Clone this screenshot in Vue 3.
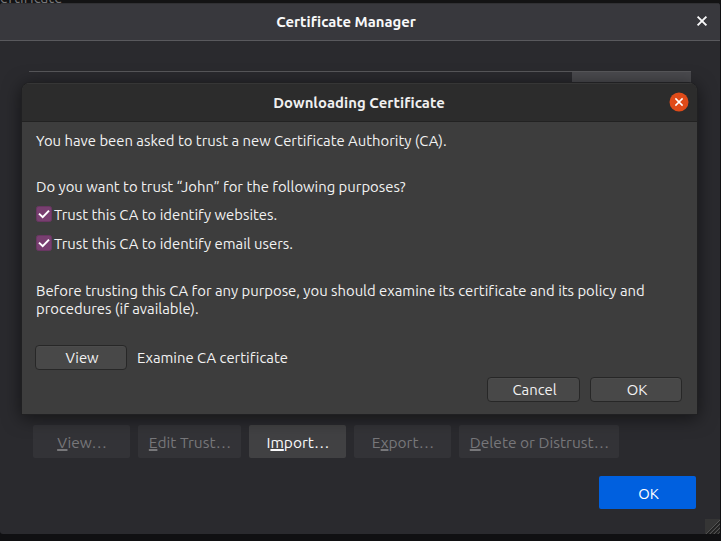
<script setup>
import { ref } from 'vue'

const actions = [
  { pre: '', key: 'V', post: 'iew…', name: 'view', disabled: true },
  { pre: '', key: 'E', post: 'dit Trust…', name: 'edit', disabled: true },
  { pre: 'I', key: 'm', post: 'port…', name: 'import', disabled: false },
  { pre: 'E', key: 'x', post: 'port…', name: 'export', disabled: true },
  { pre: '', key: 'D', post: 'elete or Distrust…', name: 'delete', disabled: true },
]
const purposes = ref([
  { text: 'Trust this CA to identify websites.', name: 'web', checked: true },
  { text: 'Trust this CA to identify email users.', name: 'mail', checked: true },
])
</script>

<template>
  <div class="screen">
    <div class="behind"><span>ertificate</span></div>
    <section class="manager">
      <header class="manager-head">
        <h1>Certificate Manager</h1>
        <button class="close" aria-label="Close">
          <svg width="12" height="12" viewBox="0 0 12 12"><path d="M1.6 1.6 10.4 10.4M10.4 1.6 1.6 10.4" /></svg>
        </button>
      </header>
      <div class="tree"><div class="tree-col"></div></div>
      <div class="actions">
        <button v-for="a in actions" :key="a.name" class="action" :class="[a.name, { off: a.disabled }]">
          <span>{{ a.pre }}<u>{{ a.key }}</u>{{ a.post }}</span>
        </button>
      </div>
      <div class="accept-row"><button class="accept">OK</button></div>
      <svg class="grip" width="15" height="15" viewBox="0 0 15 15">
        <path class="light" d="M1 15 15 1M5 15 15 5M9 15 15 9M13 15 15 13" />
        <path class="dark" d="M2 15.5 15.5 2M6 15.5 15.5 6M10 15.5 15.5 10" />
      </svg>
    </section>

    <section class="dialog">
      <header class="dialog-head">
        <h2>Downloading Certificate</h2>
        <button class="round-close" aria-label="Close">
          <svg width="20" height="20" viewBox="0 0 20 20">
            <circle cx="10" cy="10" r="9.5" />
            <path d="M6.4 6.4 13.6 13.6M13.6 6.4 6.4 13.6" />
          </svg>
        </button>
      </header>
      <div class="dialog-body">
        <p class="ask"><span>You have been asked to trust a new Certificate Authority (CA).</span></p>
        <p class="question"><span>Do you want to trust “John” for the following purposes?</span></p>
        <label v-for="p in purposes" :key="p.name" class="check" :class="p.name">
          <svg width="16" height="16" viewBox="0 0 16 16">
            <rect x=".5" y=".5" width="15" height="15" rx="2" />
            <path d="M3 7.6 6.7 11.2 13 4.6" />
          </svg>
          <span>{{ p.text }}</span>
        </label>
        <p class="before">
          <span>Before trusting this CA for any purpose, you should examine its certificate and its policy and</span><br />
          <span>procedures (if available).</span>
        </p>
        <div class="examine">
          <button class="gtk">View</button>
          <span>Examine CA certificate</span>
        </div>
        <div class="footer">
          <button class="gtk cancel">Cancel</button>
          <button class="gtk">OK</button>
        </div>
      </div>
    </section>
  </div>
</template>

<style>
body { margin: 0; overflow: hidden; background: #101012; }
</style>

<style scoped>
* { box-sizing: border-box; }
.screen {
  position: relative;
  width: 721px;
  height: 541px;
  overflow: hidden;
  background: #101012;
  color: #f2f2f2;
  font: 14.85px/18px Ubuntu, "Noto Sans", sans-serif;
  font-variant-ligatures: none;
}
button { font: inherit; font-variant-ligatures: none; color: inherit; border: 0; padding: 0; margin: 0; white-space: nowrap; }
h1, h2, p { margin: 0; font-size: inherit; }
p, span { white-space: nowrap; }
.behind { height: 3px; background: #131314; color: #77777a; }
.behind span { display: block; font-size: 15.1px; line-height: 18px; height: 3px; transform: translateY(-11px); }
.manager {
  position: relative;
  width: 720px;
  height: 531px;
  background: #2a2a2e;
  border-radius: 3px;
  overflow: hidden;
  display: flex;
  flex-direction: column;
}
.manager-head {
  height: 38px;
  flex: none;
  display: grid;
  grid-template-columns: 36px 1fr 36px;
  align-items: center;
  background: #38383d;
  border-top: 1px solid #303033;
  border-bottom: 1px solid #59595d;
}
.manager-head h1 { grid-column: 2; text-align: center; line-height: 36px; color: #f9f9fa; margin-left: -28px; }
.close { display: grid; place-items: center; background: none; height: 35px; padding-bottom: 2px; }
.close svg { fill: none; stroke: #f9f9fa; stroke-width: 1.9; }
.tree {
  flex: none;
  height: 354px;
  margin: 30px 29px 0;
  border-top: 1px solid #57575a;
  display: flex;
  justify-content: flex-end;
}
.tree-col { width: 119px; height: 20px; background: #4a4a4e; }
.actions { display: flex; gap: 8px; padding-left: 33px; }
.action { width: 97px; height: 33px; border-radius: 2px; padding: 2px 0 0 1px; background: #414143; color: #f9f9fa; font-size: 15.5px; }
.action.off { background: #333337; color: #77777a; }
.action.edit { width: 103px; }
.action.delete { width: 160px; }
.action u { text-decoration-thickness: 2px; text-underline-offset: 1px; text-decoration-skip-ink: none; }
.accept-row { display: flex; justify-content: flex-end; padding: 18px 24px 0 0; }
.accept { width: 97px; height: 33px; border-radius: 2px; padding: 2px 0 0 2px; background: #0060df; color: #fff; }
.grip { position: absolute; right: 0; bottom: 0; background: #353535; fill: none; }
.light { stroke: #555; stroke-width: 1; }
.dark { stroke: #1d1d1d; stroke-width: 1.2; }
.dialog {
  position: absolute;
  left: 22px;
  top: 83px;
  width: 675px;
  height: 331px;
  border-radius: 8px 8px 0 0;
  background: #3d3d3d;
  box-shadow: 0 0 0 1px #202022, 0 3px 18px 1px rgba(0, 0, 0, .55);
  overflow: hidden;
}
.dialog-head {
  height: 39px;
  display: grid;
  grid-template-columns: 36px 1fr 36px;
  align-items: center;
  background: #2c2c2c;
  border-top: 1px solid #363636;
  border-bottom: 1px solid #222;
}
.dialog-head h2 { grid-column: 2; text-align: center; line-height: 36px; padding: 1px 1px 0 0; color: #f0f0f0; letter-spacing: .06px; }
.round-close { display: grid; place-items: center; background: none; }
.round-close svg { position: relative; top: -.5px; }
.round-close circle { fill: #e04b19; }
.round-close path { fill: none; stroke: #fff; stroke-width: 1.5; }
.dialog-body { height: 292px; padding: 10px 15px 12px 14px; display: flex; flex-direction: column; }
.question { margin-top: 28px; }
.check { display: flex; align-items: center; height: 18px; gap: 2px; margin-top: 11px; }
.check.web { margin-top: 10px; }
.check svg { flex: none; position: relative; top: -1px; fill: #783f70; stroke: #693662; }
.check path { fill: none; stroke: #fff; stroke-width: 2; }
.before { margin-top: 29px; }
.examine { display: flex; align-items: center; gap: 10px; margin: 27px 0 0 -1px; }
.gtk {
  width: 92px;
  height: 25px;
  padding-left: 2px;
  border: 1px solid #272727;
  border-radius: 4px;
  background: #484848;
  box-shadow: inset 0 1px #4c4c4c;
}
.gtk.cancel { width: 93px; }
.footer { display: flex; justify-content: flex-end; gap: 10px; margin-top: 7px; }
</style>
